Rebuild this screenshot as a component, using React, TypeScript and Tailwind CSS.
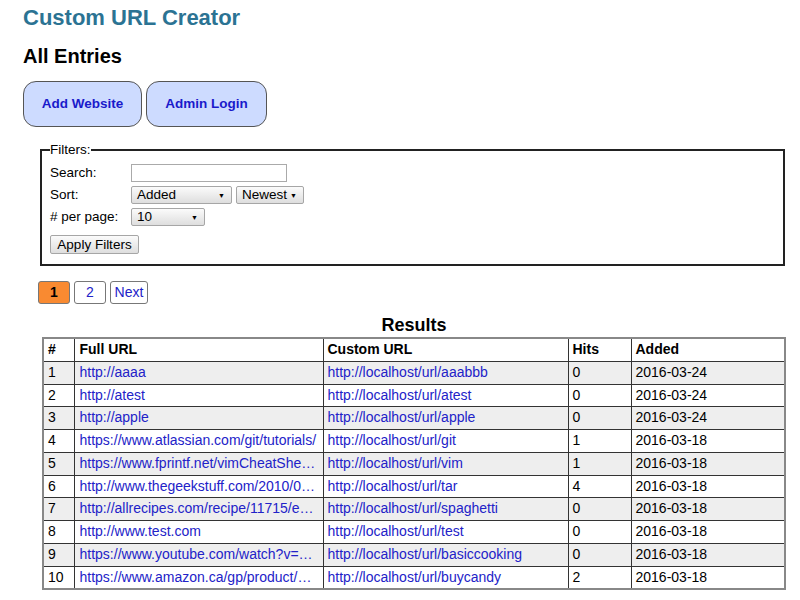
import React from "react"

const rows = [
  { n: 1, full: "http://aaaa", custom: "http://localhost/url/aaabbb", hits: 0, added: "2016-03-24" },
  { n: 2, full: "http://atest", custom: "http://localhost/url/atest", hits: 0, added: "2016-03-24" },
  { n: 3, full: "http://apple", custom: "http://localhost/url/apple", hits: 0, added: "2016-03-24" },
  { n: 4, full: "https://www.atlassian.com/git/tutorials/", custom: "http://localhost/url/git", hits: 1, added: "2016-03-18" },
  { n: 5, full: "https://www.fprintf.net/vimCheatSheet.html", custom: "http://localhost/url/vim", hits: 1, added: "2016-03-18" },
  { n: 6, full: "http://www.thegeekstuff.com/2010/04/unix-tar-command-examples/", custom: "http://localhost/url/tar", hits: 4, added: "2016-03-18" },
  { n: 7, full: "http://allrecipes.com/recipe/11715/easy-meatball-spaghetti/", custom: "http://localhost/url/spaghetti", hits: 0, added: "2016-03-18" },
  { n: 8, full: "http://www.test.com", custom: "http://localhost/url/test", hits: 0, added: "2016-03-18" },
  { n: 9, full: "https://www.youtube.com/watch?v=zXtq0mXsgCU", custom: "http://localhost/url/basiccooking", hits: 0, added: "2016-03-18" },
  { n: 10, full: "https://www.amazon.ca/gp/product/buycandy", custom: "http://localhost/url/buycandy", hits: 2, added: "2016-03-18" },
]

function FakeSelect({ value, className }: { value: string; className: string }) {
  return (
    <div
      className={`flex h-[18px] items-center justify-between rounded-[2px] border border-[#a6a6a6] bg-gradient-to-b from-[#fbfbfb] to-[#dedede] pl-[5px] pr-[6px] text-[13.5px] leading-none ${className}`}
    >
      <span>{value}</span>
      <span className="text-[7px]">▼</span>
    </div>
  )
}

export default function App() {
  return (
    <div className="min-h-[600px] w-[800px] bg-white px-[23px] pt-[5px] font-['Liberation_Sans',Arial,sans-serif] text-black">
      <h1 className="text-[22px] font-bold leading-[26px] text-[#2b7393]">Custom URL Creator</h1>
      <h2 className="mt-[13px] text-[20px] font-bold leading-[24px]">All Entries</h2>

      <div className="mt-[13px] flex gap-[4px]">
        <button className="h-[46px] w-[119px] rounded-[13px] border border-[#555] bg-[#cddbff] text-[13.5px] font-bold text-[#1a1acb]">
          Add Website
        </button>
        <button className="h-[46px] w-[121px] rounded-[13px] border border-[#555] bg-[#cddbff] text-[13.5px] font-bold text-[#1a1acb]">
          Admin Login
        </button>
      </div>

      <fieldset className="ml-[17px] mt-[15px] w-[745px] border-2 border-[#222] px-[8px] pb-[10px] pt-[6px]">
        <legend className="text-[13.5px] leading-[16px]">Filters:</legend>
        <div className="grid grid-cols-[81px_1fr] items-center gap-y-[4px] text-[13.5px] leading-[18px]">
          <span>Search:</span>
          <div className="h-[18px] w-[156px] border border-[#aaa] bg-white" />
          <span>Sort:</span>
          <div className="flex gap-[4px]">
            <FakeSelect value="Added" className="w-[101px]" />
            <FakeSelect value="Newest" className="w-[68px]" />
          </div>
          <span># per page:</span>
          <FakeSelect value="10" className="w-[74px]" />
        </div>
        <button className="mt-[9px] block h-[19px] w-[89px] rounded-[2px] border border-[#a6a6a6] bg-gradient-to-b from-[#fbfbfb] to-[#dedede] text-[13.5px] leading-none">
          Apply Filters
        </button>
      </fieldset>

      <div className="ml-[15px] mt-[15px] flex gap-[4px] text-[14px]">
        <span className="flex h-[23px] w-[32px] items-center justify-center rounded-[3px] border border-[#777] bg-[#f98a31] font-bold">
          1
        </span>
        <span className="flex h-[23px] w-[32px] items-center justify-center rounded-[3px] border border-[#777] text-[#2222c8]">
          2
        </span>
        <span className="flex h-[23px] w-[38px] items-center justify-center rounded-[3px] border border-[#777] text-[#2222c8]">
          Next
        </span>
      </div>

      <table className="ml-[19px] mt-[10px] w-[742px] table-fixed border-collapse border-2 border-[#888] text-[14px] leading-[15.75px]">
        <caption className="pb-[1px] text-[18px] font-bold leading-[22px]">Results</caption>
        <colgroup>
          <col className="w-[31px]" />
          <col className="w-[249px]" />
          <col className="w-[245px]" />
          <col className="w-[63px]" />
          <col className="w-[154px]" />
        </colgroup>
        <thead>
          <tr className="font-bold">
            <th className="border border-[#333] px-[4px] py-[3px] text-left">#</th>
            <th className="border border-[#333] px-[5px] py-[3px] text-left">Full URL</th>
            <th className="border border-[#333] px-[4px] py-[3px] text-left">Custom URL</th>
            <th className="border border-[#333] px-[4px] py-[3px] text-left">Hits</th>
            <th className="border border-[#333] px-[4px] py-[3px] text-left">Added</th>
          </tr>
        </thead>
        <tbody>
          {rows.map((r) => (
            <tr key={r.n} className={r.n % 2 === 1 ? "bg-[#eeeeee]" : "bg-white"}>
              <td className="border border-[#333] px-[4px] py-[3px]">{r.n}</td>
              <td className="truncate border border-[#333] px-[5px] py-[3px] text-[#2222c8]">{r.full}</td>
              <td className="truncate border border-[#333] px-[4px] py-[3px] text-[#2222c8]">{r.custom}</td>
              <td className="border border-[#333] px-[4px] py-[3px]">{r.hits}</td>
              <td className="border border-[#333] px-[4px] py-[3px]">{r.added}</td>
            </tr>
          ))}
        </tbody>
      </table>
    </div>
  )
}
